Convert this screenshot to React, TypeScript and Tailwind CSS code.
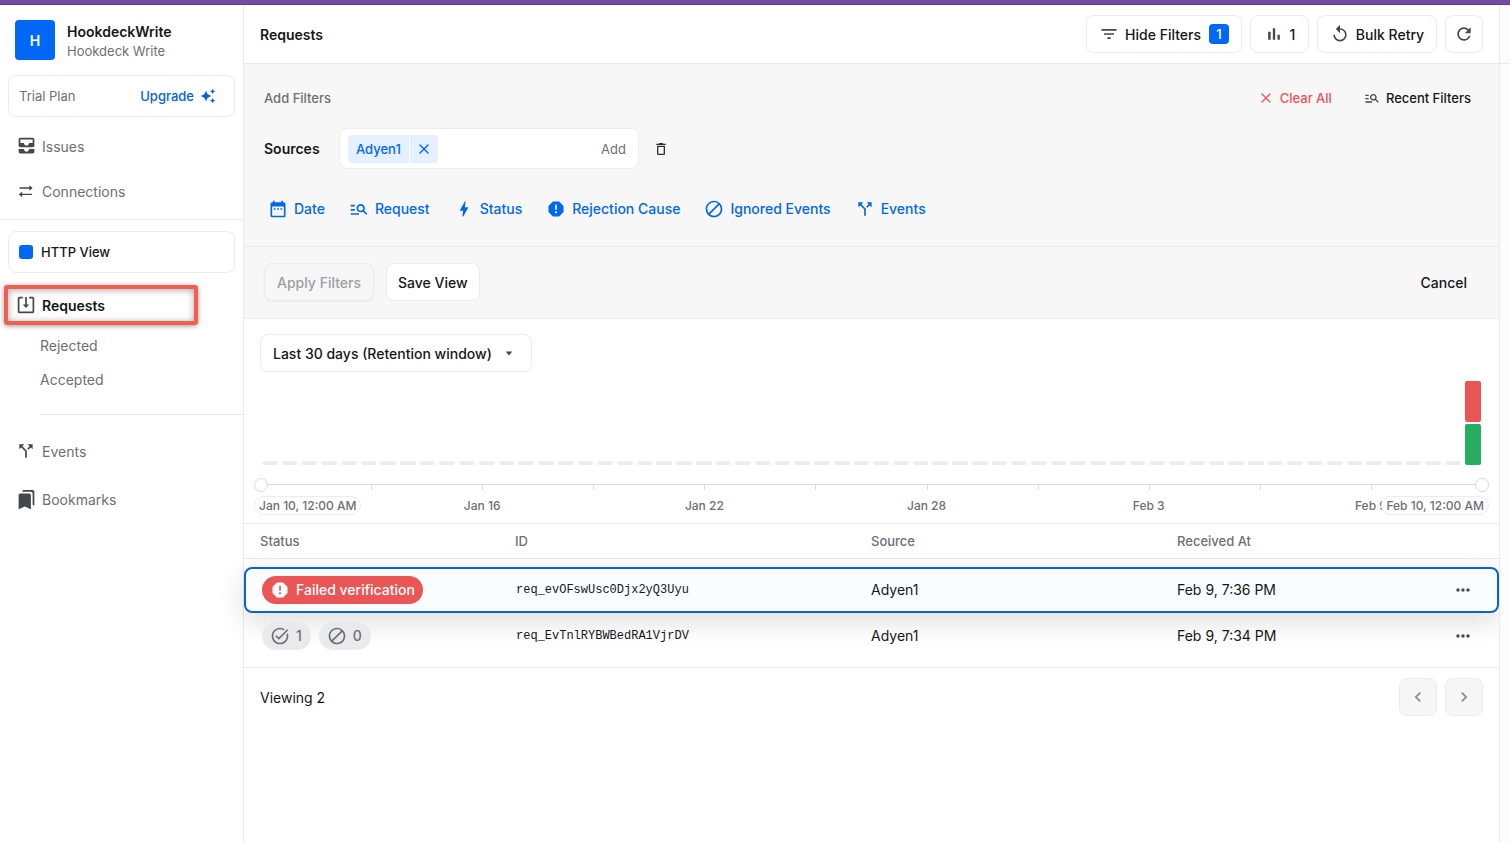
import type { ReactNode } from "react";
import type { IconType } from "react-icons";
import {
  MdAllInbox,
  MdAutoAwesome,
  MdBlock,
  MdBolt,
  MdBookmarks,
  MdCallSplit,
  MdChevronLeft,
  MdChevronRight,
  MdDateRange,
  MdDeleteOutline,
  MdFilterList,
  MdManageSearch,
  MdMoreHoriz,
  MdRefresh,
  MdReplay,
  MdReport,
  MdTaskAlt,
} from "react-icons/md";
import { X } from "lucide-react";

function ConnectionsIcon({ className }: { className?: string }) {
  return (
    <svg viewBox="0 0 16 16" fill="none" stroke="currentColor" strokeWidth="1.4" className={className} aria-hidden="true">
      <path d="M1.5 5h12M1.5 11.4H14" />
      <path d="M11.3 2.2 14.6 5l-3.3 2.8zM4.2 8.6.9 11.4l3.3 2.8z" fill="currentColor" stroke="none" />
    </svg>
  );
}

function RequestsIcon({ className }: { className?: string }) {
  return (
    <svg viewBox="0 0 18 18" fill="none" stroke="currentColor" strokeWidth="1.7" className={className} aria-hidden="true">
      <path d="M5.8 1.7H2.4a.8.8 0 0 0-.8.8v13a.8.8 0 0 0 .8.8h13.2a.8.8 0 0 0 .8-.8v-13a.8.8 0 0 0-.8-.8h-3.4M9 1v8.5" />
      <path d="M5.8 8.6h6.4L9 12z" fill="currentColor" stroke="none" />
    </svg>
  );
}

function BarsIcon({ className }: { className?: string }) {
  return (
    <svg viewBox="0 0 24 24" fill="currentColor" className={className} aria-hidden="true">
      <path d="M5 9.2h3V19H5zM10.6 5h2.8v14h-2.8zM16.2 13H19v6h-2.8z" />
    </svg>
  );
}

function NavItem({ icon, label, className }: { icon: ReactNode; label: string; className: string }) {
  return (
    <a href="#" className={`flex items-center gap-1.5 pl-4 text-sm ${className}`}>
      <span className="flex w-5 justify-center pb-0.5 text-[#44474c]">{icon}</span>
      {label}
    </a>
  );
}

function Sidebar() {
  return (
    <aside className="w-[244px] shrink-0 border-r border-[#e9eaec] text-[#6c7075]">
      <div className="flex items-center gap-3 px-[15px] pt-[15px]">
        <div className="flex size-10 items-center justify-center rounded-[4px] bg-[#0068f5] text-sm leading-[23px] font-semibold text-white">H</div>
        <div>
          <p className="text-sm leading-[21px] font-semibold text-[#15171a]">HookdeckWrite</p>
          <p className="text-[13px] leading-[18px]">Hookdeck Write</p>
        </div>
      </div>
      <div className="mx-2 mt-[15px] flex h-[42px] items-center justify-between rounded-lg border border-[#ebecee] pr-[18px] pl-2.5 text-[13px] leading-5">
        <span>Trial Plan</span>
        <a href="#" className="flex items-center gap-1.5 font-medium text-[#0062e0]">
          Upgrade
          <MdAutoAwesome className="size-4" />
        </a>
      </div>
      <nav className="mt-[7px]">
        <NavItem className="h-[45px]" icon={<MdAllInbox className="size-[21px] shrink-0" />} label="Issues" />
        <NavItem className="h-[45px]" icon={<ConnectionsIcon className="size-4" />} label="Connections" />
      </nav>
      <div className="mt-[5px] border-t border-[#e9eaec]" />
      <button type="button" className="mx-2 mt-[11px] flex h-[42px] w-[227px] items-center gap-2 rounded-lg border border-[#ebecee] pl-2.5 text-[13px] leading-5 font-medium text-[#15171a]">
        <span className="size-3.5 rounded-[3px] bg-[#0068f5]" />
        HTTP View
      </button>
      <div className="relative mt-3">
        <NavItem
          className="h-[41px] font-semibold text-[#15171a]"
          icon={<RequestsIcon className="size-[18px] shrink-0" />}
          label="Requests"
        />
        <div className="pointer-events-none absolute top-0 left-1 h-10 w-[194px] rounded-[3px] border-4 border-[#f25f50] shadow-[0_1px_5px_rgba(0,0,0,0.4),inset_0_1px_7px_rgba(0,0,0,0.35)]" />
      </div>
      <div className="mt-[3px] flex flex-col pl-10 text-sm">
        <a href="#" className="flex h-[34px] items-center">Rejected</a>
        <a href="#" className="flex h-[34px] items-center">Accepted</a>
        <div className="mt-[17px] border-t border-[#e9eaec]" />
      </div>
      <nav className="mt-[13px]">
        <NavItem className="h-12" icon={<MdCallSplit className="size-5 shrink-0" />} label="Events" />
        <NavItem className="h-12" icon={<MdBookmarks className="size-[21px] shrink-0" />} label="Bookmarks" />
      </nav>
    </aside>
  );
}

function OutlineButton({ children, className }: { children: ReactNode; className: string }) {
  return (
    <button type="button" className={`flex h-[38px] items-center justify-center rounded-lg border border-[#ebecee] bg-white text-sm leading-[23px] font-medium ${className}`}>
      {children}
    </button>
  );
}

function Header() {
  return (
    <header className="flex h-[59px] items-center justify-between border-b border-[#e9eaec] px-4">
      <h1 className="text-sm leading-[23px] font-semibold">Requests</h1>
      <div className="flex gap-2">
        <OutlineButton className="gap-1.5 px-3">
          <MdFilterList className="size-5 text-[#44474c]" />
          Hide Filters
          <span className="ml-0.5 flex size-5 items-center justify-center rounded-[4px] bg-[#0068f5] text-[13px] text-white">1</span>
        </OutlineButton>
        <OutlineButton className="w-[59px] gap-1.5">
          <BarsIcon className="size-5 text-[#44474c]" />
          1
        </OutlineButton>
        <OutlineButton className="w-[120px] gap-1.5">
          <MdReplay className="size-5 text-[#44474c]" />
          Bulk Retry
        </OutlineButton>
        <button type="button" aria-label="Refresh" className="flex size-[38px] items-center justify-center rounded-lg border border-[#ebecee] text-[#44474c]">
          <MdRefresh className="size-5" />
        </button>
      </div>
    </header>
  );
}

const filterLinks: { label: string; icon: IconType }[] = [
  { label: "Date", icon: MdDateRange },
  { label: "Request", icon: MdManageSearch },
  { label: "Status", icon: MdBolt },
  { label: "Rejection Cause", icon: MdReport },
  { label: "Ignored Events", icon: MdBlock },
  { label: "Events", icon: MdCallSplit },
];

function Filters() {
  return (
    <>
      <section className="border-b border-[#e9eaec] bg-[#f7f7f7] px-5 pt-4 pb-[17px]">
        <div className="flex h-9 items-center justify-between">
          <h2 className="text-[13px] leading-5 font-medium text-[#6c7075]">Add Filters</h2>
          <div className="flex gap-8 pr-2 text-[13px] leading-5 font-medium">
            <button type="button" className="flex items-center gap-1.5 text-[#e85555]">
              <X className="size-4" strokeWidth={1.8} />
              Clear All
            </button>
            <button type="button" className="flex items-center gap-1.5">
              <MdManageSearch className="size-4 text-[#44474c]" />
              Recent Filters
            </button>
          </div>
        </div>
        <div className="mt-3 flex h-[41px] items-center">
          <label htmlFor="sources" className="w-[75px] text-sm leading-[22px] font-semibold">Sources</label>
          <div className="flex h-[41px] w-[300px] items-center rounded-lg border border-[#ececee] bg-white px-2">
            <div className="flex h-7 shrink-0 items-stretch gap-px text-[13px] leading-5 font-medium text-[#0068f5]">
              <span className="flex items-center rounded-l-[4px] bg-[#e5f0fe] px-2">Adyen1</span>
              <button type="button" aria-label="Remove Adyen1" className="flex w-7 items-center justify-center rounded-r-[4px] bg-[#e5f0fe]">
                <X className="size-4" strokeWidth={2} />
              </button>
            </div>
            <input id="sources" type="text" className="min-w-0 flex-1 px-2 text-[13px] outline-none" />
            <button type="button" className="pr-1 text-[13px] leading-5 text-[#6c7075]">Add</button>
          </div>
          <button type="button" aria-label="Delete filter" className="ml-3.5 text-[#2f3236]">
            <MdDeleteOutline className="size-4" />
          </button>
        </div>
        <div className="mt-5 flex h-10 items-center gap-6 pl-1">
          {filterLinks.map(({ label, icon: Icon }) => (
            <button key={label} type="button" className="flex items-center gap-1.5 text-sm font-medium text-[#0068ea]">
              <Icon className="size-5" />
              {label}
            </button>
          ))}
        </div>
      </section>
      <section className="flex items-center justify-between border-b border-[#e9eaec] bg-[#f7f7f7] px-5 pt-4 pb-[17px]">
        <div className="flex gap-3">
          <button type="button" disabled className="flex h-[38px] items-center rounded-lg border border-[#ececed] bg-[#f7f7f7] px-3 text-sm leading-[23px] font-medium text-[#9b9fa4] shadow-xs">
            Apply Filters
          </button>
          <OutlineButton className="px-[11px]">Save View</OutlineButton>
        </div>
        <button type="button" className="pr-3 text-sm leading-[23px] font-medium">Cancel</button>
      </section>
    </>
  );
}

const emptyDays = Array.from({ length: 61 }, (_, i) => i);
const axisLabels = ["", "", "Jan 16", "", "Jan 22", "", "Jan 28", "", "Feb 3", "", "Feb 9"];

const thumbClass =
  "pointer-events-none absolute inset-x-0 top-0 h-3.5 w-full appearance-none bg-transparent [&::-webkit-slider-thumb]:pointer-events-auto [&::-webkit-slider-thumb]:size-3.5 [&::-webkit-slider-thumb]:appearance-none [&::-webkit-slider-thumb]:rounded-full [&::-webkit-slider-thumb]:border [&::-webkit-slider-thumb]:border-[#d8dadd] [&::-webkit-slider-thumb]:bg-white";

const pillClass = "absolute top-0 flex h-[19px] items-center rounded-full border border-[#ebecee] bg-white px-1";

function Chart() {
  return (
    <section className="border-b border-[#e9eaec] pt-[15px] pb-2">
      <div className="relative ml-4 w-[272px]">
        <select aria-label="Time range" className="h-[38px] w-full appearance-none rounded-lg border border-[#ebecee] bg-white pt-0.5 pl-3 text-sm font-medium">
          <option>Last 30 days (Retention window)</option>
        </select>
        <svg viewBox="0 0 8 5" fill="#44474c" className="pointer-events-none absolute top-[17px] right-[19px] h-[5px] w-2" aria-hidden="true">
          <path d="M.8.5h6.4L4.5 4a.7.7 0 0 1-1 0z" />
        </svg>
      </div>
      <div className="mx-[18px] mt-[9px] flex h-[84px] items-end gap-1">
        {emptyDays.map((day) => (
          <div key={day} className="h-1 flex-1 rounded-full bg-[#ececec]" />
        ))}
        <div className="flex h-full flex-1 flex-col gap-0.5">
          <div className="flex-1 rounded-xs bg-[#ea5656]" />
          <div className="flex-1 rounded-xs bg-[#27ae60]" />
        </div>
      </div>
      <div className="relative mx-2.5 mt-[13px] h-3.5">
        <div className="mr-[7px] ml-1.5 grid grid-cols-11 pt-1.5">
          {axisLabels.map((label, i) => (
            <div key={i} className={i === 0 ? "h-1.5 border-t border-[#d8dadd]" : "h-1.5 border-t border-l border-[#d8dadd]"} />
          ))}
        </div>
        <input type="range" aria-label="Start date" min={0} max={31} defaultValue={0} className={thumbClass} />
        <input type="range" aria-label="End date" min={0} max={31} defaultValue={31} className={thumbClass} />
      </div>
      <div className="relative mx-2.5 mt-1 text-xs leading-[19px] font-medium text-[#6c7075]">
        <div className="mr-[7px] ml-1.5 grid h-[19px] grid-cols-11">
          {axisLabels.map((label, i) => (
            <span key={i} className="w-max -translate-x-1/2">{label}</span>
          ))}
        </div>
        <span className={`${pillClass} left-0`}>Jan 10, 12:00 AM</span>
        <span className={`${pillClass} right-0`}>Feb 10, 12:00 AM</span>
      </div>
    </section>
  );
}

function CountBadge({ icon: Icon, count }: { icon: IconType; count: number }) {
  return (
    <span className="flex h-7 items-center gap-1.5 rounded-full bg-[#e9eaeb] pr-[9px] pl-2 text-sm font-medium text-[#6c7075]">
      <Icon className="size-5" />
      {count}
    </span>
  );
}

function RequestRow({ status, id, time, selected }: { status: ReactNode; id: string; time: string; selected?: boolean }) {
  return (
    <tr
      className={
        selected
          ? "h-[46px] rounded-lg bg-[#fafdff] shadow-[0_8px_28px_rgba(0,0,0,0.14)] outline-2 -outline-offset-2 outline-[#0a62d0]"
          : "h-[46px]"
      }
    >
      <td className="pl-[18px]">
        <div className="flex gap-2">{status}</div>
      </td>
      <td className="pl-[17px] font-['Liberation_Mono',monospace] text-xs">{id}</td>
      <td className="pl-4 text-sm">Adyen1</td>
      <td className="pl-4 text-sm">{time}</td>
      <td className="pl-[15px]">
        <button type="button" aria-label="More actions" className="flex text-[#44474c]">
          <MdMoreHoriz className="size-5" />
        </button>
      </td>
    </tr>
  );
}

function RequestsTable() {
  return (
    <table className="w-full table-fixed border-separate border-spacing-0 text-left">
      <colgroup>
        <col className="w-[255px]" />
        <col className="w-[356px]" />
        <col className="w-[306px]" />
        <col className="w-[277px]" />
        <col className="w-[61px]" />
      </colgroup>
      <thead>
        <tr className="h-[35px] text-[13px] leading-5 text-[#6c7075] [&>th]:border-b [&>th]:border-[#e9eaec] [&>th]:pl-4 [&>th]:font-medium">
          <th>Status</th>
          <th>ID</th>
          <th>Source</th>
          <th>Received At</th>
          <th aria-label="Actions" />
        </tr>
      </thead>
      <tbody className="before:block before:h-2 before:content-['']">
        <RequestRow
          selected
          id="req_evOFswUsc0Djx2yQ3Uyu"
          time="Feb 9, 7:36 PM"
          status={
            <span className="flex h-7 items-center gap-1.5 rounded-full bg-[#ea5656] px-2 text-sm font-medium text-white">
              <MdReport className="size-5" />
              Failed verification
            </span>
          }
        />
        <RequestRow
          id="req_EvTnlRYBWBedRA1VjrDV"
          time="Feb 9, 7:34 PM"
          status={
            <>
              <CountBadge icon={MdTaskAlt} count={1} />
              <CountBadge icon={MdBlock} count={0} />
            </>
          }
        />
      </tbody>
    </table>
  );
}

const pagerClass = "flex size-[38px] items-center justify-center rounded-lg border border-[#ebecee] bg-[#f6f6f7] text-[#85898e]";

export default function App() {
  return (
    <div className="flex min-h-screen flex-col bg-white font-['Inter',sans-serif] text-[#15171a]">
      <div className="h-[5px] border-b border-[#5c3f87] bg-[#714ca3]" />
      <div className="flex flex-1">
        <Sidebar />
        <main className="min-w-0 flex-1">
          <Header />
          <Filters />
          <Chart />
          <RequestsTable />
          <footer className="mt-2 flex items-center justify-between border-t border-[#e9eaec] px-4 pt-2.5">
            <p className="text-sm leading-[23px]">Viewing 2</p>
            <div className="flex gap-2">
              <button type="button" disabled aria-label="Previous page" className={pagerClass}>
                <MdChevronLeft className="size-5" />
              </button>
              <button type="button" disabled aria-label="Next page" className={pagerClass}>
                <MdChevronRight className="size-5" />
              </button>
            </div>
          </footer>
        </main>
        <div className="w-[11px] shrink-0 border-l border-[#e9eaec] bg-[#fcfcfd]">
          <div className="h-[59px] border-b border-[#e9eaec]" />
        </div>
      </div>
    </div>
  );
}
